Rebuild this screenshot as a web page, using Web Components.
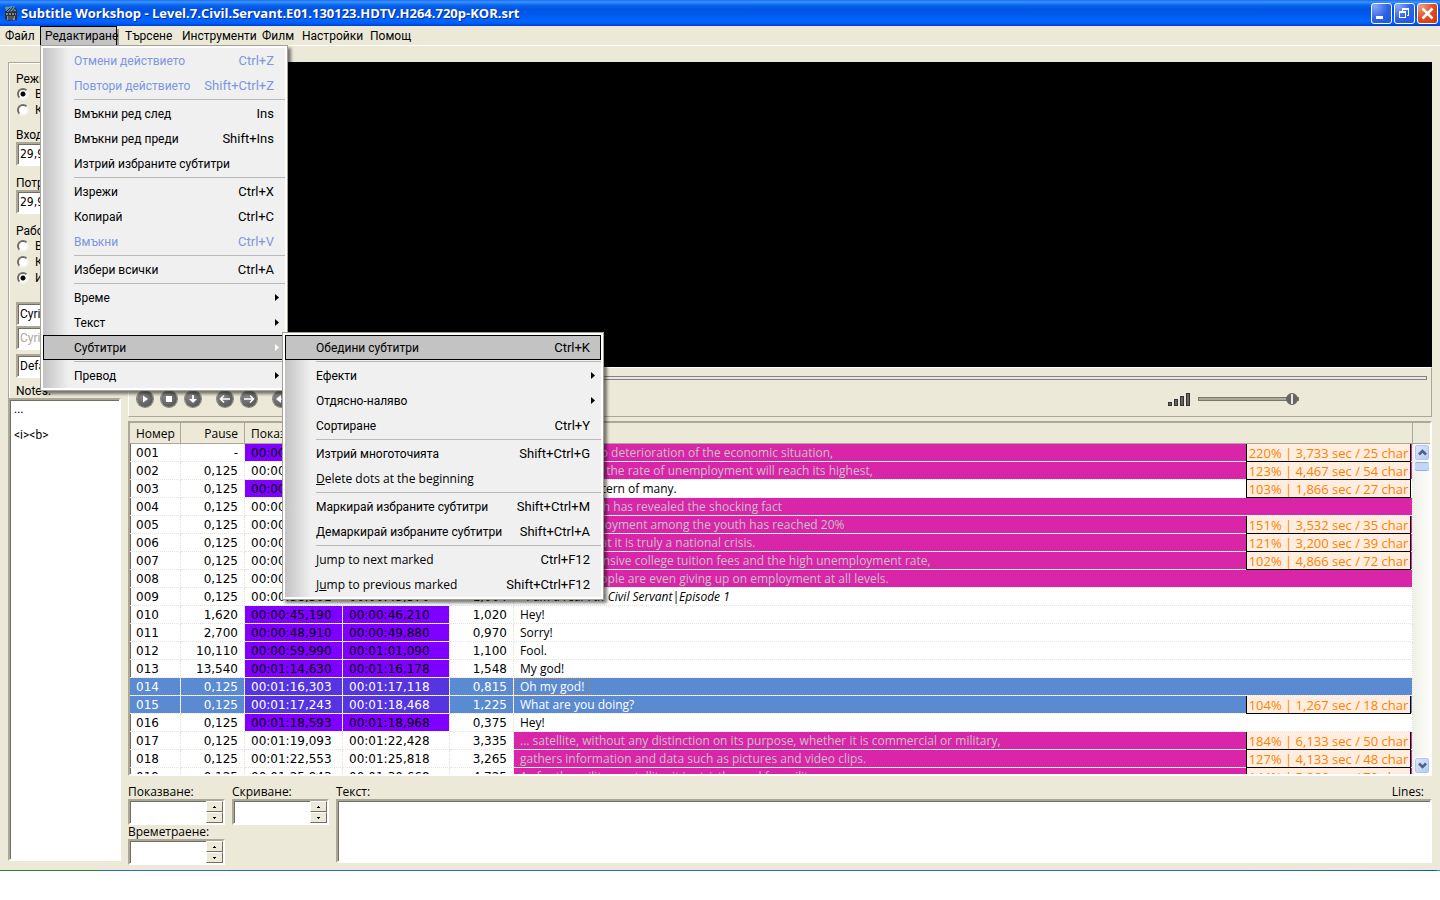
<!DOCTYPE html>
<html lang="bg">
<head>
<meta charset="utf-8">
<title>Subtitle Workshop</title>
<style>
  html { background: #fff; }
  body { margin: 0; font: 12px/15px Roboto, "Liberation Sans", sans-serif; color: #000; }
</style>
</head>
<body>
<sw-app></sw-app>
<script>
const define = (name, html, setup) => {
  const tpl = document.createElement('template');
  tpl.innerHTML = html;
  customElements.define(name, class extends HTMLElement {
    connectedCallback() {
      if (this.shadowRoot) return;
      const root = this.attachShadow({ mode: 'open' });
      root.append(tpl.content.cloneNode(true));
      if (setup) setup(this, root);
    }
  });
};

const SUNKEN = 'box-sizing: border-box; border: 2px solid; border-color: #aca899 #fff #fff #aca899; box-shadow: inset 1px 1px 0 #716f64; border-radius: 0; outline: none; background: #fff;';

/* Title bar */
define('sw-titlebar', `
<style>
  :host { display: flex; align-items: center; box-sizing: border-box; height: 26px; padding: 0 2px 0 3px;
    background: linear-gradient(#1c6cf0 0, #3a94ff 2px, #0a66f0 5px, #0054e3 9px, #0058ee 15px, #0066ff 20px, #0060fc 23px, #003dd0 26px); }
  h1 { flex: 1; margin: 0 0 0 3px; font: bold 13px/18px "Open Sans", sans-serif; color: #fff; text-shadow: 1px 1px 0 #0a2a8c; white-space: nowrap; }
  .buttons { display: flex; gap: 2px; }
  button { padding: 0; width: 21px; height: 21px; border: 1px solid #fff; border-radius: 3px;
    background: radial-gradient(circle at 15% 10%, #88a8f8, #2f62e4 55%, #1c56e8); }
  .close { background: radial-gradient(circle at 15% 10%, #f09a80, #e04a20 55%, #cc3a08); }
  svg { display: block; }
</style>
<svg width="15" height="17" viewBox="0 0 15 17"><path d="M2 4l9-2 3 3v10l-9 1-3-2z" fill="#2b3038"/><path d="M2 2l9-1 2 5-10 1z" fill="#5a96b4"/><path d="M3 7l4-4M6 7l4-5M9 7l3-4" stroke="#20242c"/><path d="M3 9h10" stroke="#d8d8d8" stroke-dasharray="2 1"/><path d="M4 11h8v4H4z" fill="#8a8f96"/><path d="M5 12h6M5 14h5" stroke="#181a20"/></svg>
<h1><slot></slot></h1>
<div class="buttons">
  <button aria-label="Minimize"><svg width="19" height="19"><path d="M4 12h7v3H4z" fill="#fff"/></svg></button>
  <button aria-label="Restore"><svg width="19" height="19" fill="#fff"><path d="M7 4h7v2H7zM13 6h1v6h-1zM12 11h1v1h-1zM7 6h1v1H7zM4 7h7v2H4zM4 9h1v5H4zM10 9h1v5h-1zM4 13h7v1H4z"/></svg></button>
  <button class="close" aria-label="Close"><svg width="19" height="19"><path d="M4.500 4.500l10 10M14.500 4.500l-10 10" stroke="#fff" stroke-width="2.500"/></svg></button>
</div>`);

/* Menu bar and its entries */
define('sw-menubar', `
<style>
  :host { display: grid; grid-template-columns: 40px 80px 57px 80px 40px 68px auto; justify-content: start;
    box-sizing: border-box; height: 20px; border-bottom: 1px solid #fff; position: relative; z-index: 10; }
</style><slot></slot>`);

define('sw-menu', `
<style>
  :host { display: block; position: relative; }
  button { width: 100%; height: 19px; padding: 2px 0 0 5px; border: 0; background: none; text-align: left; font: inherit; color: #000; white-space: nowrap; }
  :host([open]) button { width: 77px; padding: 0 0 0 4px; border: 1px solid #000; border-bottom: 0; background: #c3c3c3; box-shadow: 2px 3px 0 #a19e90; }
  ::slotted([slot=popup]) { position: absolute; left: 0; top: 19px; }
</style>
<button aria-haspopup="menu"></button><slot name="popup"></slot>`,
(el, root) => { root.querySelector('button').textContent = el.getAttribute('label'); });

define('sw-popup', `
<style>
  :host { display: block; box-sizing: border-box; border: 1px solid #a5a293; padding: 2px; background: #fff; box-shadow: 3px 3px 3px rgba(0,0,0,.5); z-index: 20; }
  .items { background: linear-gradient(90deg, #c3c3c3, #f0f0f0 26px); }
</style><div class="items" role="menu"><slot></slot></div>`);

define('sw-item', `
<style>
  :host { display: block; position: relative; }
  button { display: flex; justify-content: space-between; align-items: center; box-sizing: border-box; width: 100%; height: 25px;
    padding: 0 10px 0 30px; border: 1px solid transparent; background: none; font: inherit; color: #000; white-space: nowrap; }
  .label { padding-top: 2px; }
  :host([latin]) .label { padding-top: 0; font-family: "Open Sans", sans-serif; }
  .key { font-size: 13px; }
  button:disabled { color: #7b97e0; }
  :host([active]) button { background: #c3c3c3; border-color: #000; }
  :host([submenu]) button { padding-right: 5px; }
  svg { display: none; }
  :host([submenu]) svg { display: block; }
  :host([submenu][active]) svg { color: #fff; }
  ::slotted([slot=submenu]) { position: absolute; left: 239px; top: -3px; }
</style>
<button role="menuitem"><span class="label"><slot></slot></span><span class="key"></span><svg width="4" height="7"><path d="M0 0l4 3.500L0 7z" fill="currentColor"/></svg></button>
<slot name="submenu"></slot>`,
(el, root) => {
  const key = root.querySelector('.key');
  if (el.hasAttribute('key')) key.textContent = el.getAttribute('key'); else key.remove();
  root.querySelector('button').disabled = el.hasAttribute('off');
});

define('sw-sep', `
<style>:host { display: block; height: 3px; } hr { margin: 0 0 0 31px; border: 0; height: 2px; border-bottom: 1px solid #b9b9b9; box-sizing: border-box; }</style><hr>`);

/* Left settings column */
define('sw-settings', `
<style>
  :host { display: flex; flex-direction: column; }
  .group { box-sizing: border-box; border-left: 1px solid #aca899; border-top: 1px solid #aca899; box-shadow: inset 1px 1px 0 #fff; padding: 8px 8px 0 7px; overflow: hidden; white-space: nowrap; }
  .caption { display: block; height: 15px; line-height: 17px; margin-top: 9px; }
  .first { margin-top: 0; }
  .radio { display: flex; align-items: center; gap: 5px; height: 16px; line-height: 16px; }
  input { appearance: none; flex: none; box-sizing: border-box; width: 12px; height: 12px; margin: 0 1px; border: 2px solid; border-color: #716f64 #f4f2e8 #f4f2e8 #716f64; border-radius: 50%; background: #fff; }
  input:checked { background: radial-gradient(circle, #000 2px, #fff 3px); }
  select { ${SUNKEN} appearance: none; display: block; width: 97px; height: 24px; padding: 0 2px; font: 12px/18px "DejaVu Sans Condensed", sans-serif; color: #000; }
  .charset { margin-top: 16px; }
  .charset select { font: 12px/18px Roboto, sans-serif; }
  .charset select + select + select { margin-top: 4px; }
  select:disabled { color: #aca899; opacity: 1; }
  .notes { margin-top: 5px; }
  textarea { ${SUNKEN} flex: 1; margin: 0 0 4px; width: 100%; padding: 3px 4px; resize: none; font: 12px/13px Roboto, sans-serif; color: #000; }
</style>
<div class="group">
  <span class="caption first">Режим</span>
  <label class="radio"><input type="radio" name="mode" checked>Време</label>
  <label class="radio"><input type="radio" name="mode">Кадри</label>
  <label class="caption" for="in">Входящ FPS</label>
  <select id="in"><option>29,97</option></select>
  <label class="caption" for="out">Потребит. FPS</label>
  <select id="out"><option>29,97</option></select>
  <span class="caption">Работа с</span>
  <label class="radio"><input type="radio" name="work">Време</label>
  <label class="radio"><input type="radio" name="work">Край</label>
  <label class="radio"><input type="radio" name="work" checked>И двете</label>
  <div class="charset">
    <select aria-label="Charset"><option>Cyrillic</option></select>
    <select aria-label="Translation charset" disabled><option>Cyrillic</option></select>
    <select aria-label="Script"><option>Default</option></select>
  </div>
  <label class="caption notes" for="notes">Notes:</label>
</div>
<textarea id="notes">...

&lt;i&gt;&lt;b&gt;</textarea>`);

/* Playback controls */
define('sw-player', `
<style>
  :host { display: flex; flex-direction: column; box-sizing: border-box; height: 50px; border: 1px solid #aca899; border-left-color: #fff; border-top-color: #fff; padding: 8px 4px 0 8px; }
  input { appearance: none; display: block; margin: 0; background: none; }
  .seek { width: 100%; height: 4px; box-sizing: border-box; border: 1px solid #85827c; background: #ece2f5; }
  .seek::-webkit-slider-thumb { appearance: none; width: 12px; height: 12px; border-radius: 50%; background: #6a6a6a; }
  .row { display: flex; align-items: center; margin-top: 9px; height: 20px; }
  .set { display: flex; gap: 8px; margin-right: 16px; }
  button { width: 16px; height: 16px; padding: 0; border: 0; border-radius: 50%; background: radial-gradient(circle at 35% 30%, #8c8c8c, #585858 75%); box-shadow: 0 0 0 1px #88857c; }
  button svg { display: block; }
  .vol { display: flex; align-items: center; gap: 7px; margin: 0 128px 0 auto; }
  .level { width: 101px; height: 13px; }
  .level::-webkit-slider-runnable-track { height: 4px; box-sizing: border-box; border: 1px solid #77756c; background: #aca899; }
  .level::-webkit-slider-thumb { appearance: none; box-sizing: border-box; width: 12px; height: 12px; margin-top: -5px; border-radius: 50%; background: linear-gradient(90deg, #666 4px, #e6e6e6 4px, #e6e6e6 6px, #666 6px); border: 1px solid #666; }
</style>
<input class="seek" type="range" value="0" aria-label="Position">
<div class="row">
  <div class="set"></div><div class="set"></div><div class="set"></div>
  <div class="vol">
    <svg width="23" height="14" fill="#666" stroke="#333"><rect x=".5" y="10.500" width="3" height="3"/><rect x="6.500" y="7.500" width="3" height="6"/><rect x="12.500" y="4.500" width="3" height="9"/><rect x="18.500" y="1.500" width="3" height="12"/></svg>
    <input class="level" type="range" value="100" aria-label="Volume">
  </div>
</div>`,
(el, root) => {
  const icons = [
    [['Play', '<path d="M6 4.500L11 8 6 11.500z" fill="#fff"/>'], ['Stop', '<path d="M5 5h6v6H5z" fill="#fff"/>'],
     ['Scroll list', '<path d="M7 4h2v4h3l-4 4-4-4h3z" fill="#fff"/>']],
    [['Previous subtitle', '<path d="M13 8H4M7 4.500L3.500 8 7 11.500" fill="none" stroke="#fff" stroke-width="1.500"/>'],
     ['Next subtitle', '<path d="M3 8h9M9 4.500L12.500 8 9 11.500" fill="none" stroke="#fff" stroke-width="1.500"/>']],
    [['Rewind', '<path d="M8 4v8L3 8zM13 4v8L8 8z" fill="#fff"/>'], ['Forward', '<path d="M3 4v8l5-4zM8 4v8l5-4z" fill="#fff"/>']]
  ];
  root.querySelectorAll('.set').forEach((set, i) => {
    set.innerHTML = icons[i].map(([n, p]) => `<button aria-label="${n}"><svg width="16" height="16">${p}</svg></button>`).join('');
  });
});

/* Subtitle list. Flags: s = short time cells, p = long line, x = selected, f = focused */
const ROWS = [
  ['001', '-', '00:00:09,100', '00:00:12,833', '3,733', 'Following sharp deterioration of the economic situation,', 'sp', '220% | 3,733 sec / 25 char'],
  ['002', '0,125', '00:00:12,958', '00:00:17,425', '4,467', 'All fall in Korea the rate of unemployment will reach its highest,', 'p', '123% | 4,467 sec / 54 char'],
  ['003', '0,125', '00:00:17,550', '00:00:19,416', '1,866', 'so it is the concern of many.', 's', '103% | 1,866 sec / 27 char'],
  ['004', '0,125', '00:00:19,541', '00:00:22,666', '3,125', 'Recent research has revealed the shocking fact', 'p', ''],
  ['005', '0,125', '00:00:22,791', '00:00:26,323', '3,532', 'so that unemployment among the youth has reached 20%', 'p', '151% | 3,532 sec / 35 char'],
  ['006', '0,125', '00:00:26,448', '00:00:29,648', '3,200', 'It is so clear that it is truly a national crisis.', 'p', '121% | 3,200 sec / 39 char'],
  ['007', '0,125', '00:00:29,773', '00:00:34,639', '4,866', 'With very expensive college tuition fees and the high unemployment rate,', 'p', '102% | 4,866 sec / 72 char'],
  ['008', '0,125', '00:00:34,764', '00:00:38,176', '3,412', 'Now young people are even giving up on employment at all levels.', 'p', ''],
  ['009', '0,125', '00:00:38,301', '00:00:43,570', '1,004', '<i>- I am a real 7th Civil Servant|Episode 1</i>', '', ''],
  ['010', '1,620', '00:00:45,190', '00:00:46,210', '1,020', 'Hey!', 's', ''],
  ['011', '2,700', '00:00:48,910', '00:00:49,880', '0,970', 'Sorry!', 's', ''],
  ['012', '10,110', '00:00:59,990', '00:01:01,090', '1,100', 'Fool.', 's', ''],
  ['013', '13,540', '00:01:14,630', '00:01:16,178', '1,548', 'My god!', 's', ''],
  ['014', '0,125', '00:01:16,303', '00:01:17,118', '0,815', 'Oh my god!', 'sxf', ''],
  ['015', '0,125', '00:01:17,243', '00:01:18,468', '1,225', 'What are you doing?', 'sx', '104% | 1,267 sec / 18 char'],
  ['016', '0,125', '00:01:18,593', '00:01:18,968', '0,375', 'Hey!', 's', ''],
  ['017', '0,125', '00:01:19,093', '00:01:22,428', '3,335', '... satellite, without any distinction on its purpose, whether it is commercial or military,', 'p', '184% | 6,133 sec / 50 char'],
  ['018', '0,125', '00:01:22,553', '00:01:25,818', '3,265', 'gathers information and data such as pictures and video clips.', 'p', '127% | 4,133 sec / 48 char'],
  ['019', '0,125', '00:01:25,943', '00:01:30,668', '4,725', 'As for the military satellite, it is strictly used for military.', 'p', '144% | 5,066 sec / 70 char']
];

define('sw-list', `
<style>
  :host { display: grid; grid-template-columns: 1fr 17px; grid-template-rows: minmax(0, 1fr); ${SUNKEN} overflow: hidden; }
  .view { overflow: hidden; }
  table { width: 100%; table-layout: fixed; border-collapse: separate; border-spacing: 0; }
  th { box-sizing: border-box; height: 21px; padding: 2px 6px 0; border-right: 1px solid #aca899; border-bottom: 1px solid #aca899; background: #ece9d8; font: 12px/18px "Open Sans", Roboto, sans-serif; text-align: left; white-space: nowrap; overflow: hidden; }
  th.r, td.r { text-align: right; }
  td { height: 15px; padding: 2px 6px 0; border-right: 1px dotted #e4e0cc; border-bottom: 1px dotted #e4e4e4; background-clip: padding-box; font: 12px/15px "DejaVu Sans", sans-serif; white-space: nowrap; }
  td.text { height: 17px; padding: 0; font-family: "Open Sans", sans-serif; }
  .line { display: flex; justify-content: space-between; height: 17px; }
  .words { box-sizing: border-box; height: 17px; padding: 1px 6px 0; line-height: 16px; }
  .info { box-sizing: border-box; width: 165px; height: 18px; margin-right: 1px; border: 1px solid #000; border-top: 0; background: #ffeee0; color: #ff8000; font: 13px/18px "Open Sans", sans-serif; text-align: center; }
  .s td.t { background-color: #8000ff; }
  .p td.text { background-color: #d926a9; color: #c8c0c8; }
  .x td { background-color: #5a8ad2; color: #fff; }
  .x td.t { background-color: #5535e0; }
  .f .words { outline: 1px dotted #c08030; outline-offset: -1px; }
  .scroll { display: flex; flex-direction: column; background: linear-gradient(90deg, #f0f0ea, #fdfdfa); }
  .corner { box-sizing: border-box; height: 21px; background: #ece9d8; border-bottom: 1px solid #aca899; }
  button { flex: none; width: 16px; height: 17px; margin: 0 0 0 1px; padding: 0; border: 1px solid #fff; border-radius: 3px; background: linear-gradient(135deg, #dfe8ff, #b4c8f6); box-shadow: inset 0 0 0 1px #b0c4ee; }
  button svg { display: block; margin: 0 auto; }
  .thumb { height: 7px; margin: 1px 1px 0 2px; border: 1px solid #94aee0; border-width: 1px 0; border-radius: 2px; background: #c4d4fb; }
  .gap { flex: 1; }
</style>
<div class="view"><table>
  <colgroup><col style="width:51px"><col style="width:64px"><col style="width:98px"><col style="width:107px"><col style="width:64px"><col></colgroup>
  <thead><tr><th>Номер</th><th class="r">Pause</th><th>Показване</th><th>Скриване</th><th class="r">Време</th><th>Текст</th></tr></thead>
  <tbody></tbody>
</table></div>
<div class="scroll"><div class="corner"></div>
  <button aria-label="Up"><svg width="9" height="7"><path d="M1 5.500l3.500-3.500L8 5.500" fill="none" stroke="#4d6185" stroke-width="2.500"/></svg></button>
  <div class="thumb"></div><div class="gap"></div>
  <button aria-label="Down"><svg width="9" height="7"><path d="M1 1.500l3.500 3.500L8 1.500" fill="none" stroke="#4d6185" stroke-width="2.500"/></svg></button>
</div>`,
(el, root) => {
  root.querySelector('tbody').innerHTML = ROWS.map(([n, pause, show, hide, dur, text, flags, info]) =>
    `<tr class="${[...flags].join(' ')}"><td>${n}</td><td class="r">${pause}</td><td class="t">${show}</td><td class="t">${hide}</td><td class="r">${dur}</td>` +
    `<td class="text"><div class="line"><span class="words">${text}</span>${info ? `<span class="info">${info}</span>` : ''}</div></td></tr>`).join('');
});

/* Time box with up and down buttons */
define('sw-time', `
<style>
  :host { display: block; font-family: "Open Sans", sans-serif; }
  label { display: block; height: 14px; line-height: 14px; white-space: nowrap; }
  .box { display: flex; ${SUNKEN} height: 26px; }
  input { flex: 1; min-width: 0; border: 0; margin: 2px; padding: 0 2px; outline: none; background: none; font: inherit; }
  .spin { display: grid; grid-template-rows: 11px 11px; width: 17px; }
  button { padding: 0; border: 1px solid; border-color: #fff #716f64 #716f64 #fff; background: #ece9d8; display: grid; place-items: center; }
</style>
<label for="v"></label>
<div class="box"><input id="v" type="text"><div class="spin">
  <button aria-label="+"><svg width="3" height="2"><path d="M0 2h3v-1h-1V0H1v1H0z"/></svg></button>
  <button aria-label="-"><svg width="3" height="2"><path d="M0 0h3v1h-1v1H1V1H0z"/></svg></button>
</div></div>`,
(el, root) => { root.querySelector('label').textContent = el.getAttribute('label'); });

define('sw-editor', `
<style>
  :host { display: grid; grid-template-columns: 97px 97px 1fr; gap: 0 7px; padding-top: 9px; height: 80px; font-family: "Open Sans", sans-serif; }
  .text { grid-column: 3; grid-row: 1 / 3; display: flex; flex-direction: column; }
  .head { display: flex; justify-content: space-between; height: 14px; line-height: 14px; padding-right: 8px; }
  textarea { ${SUNKEN} flex: 1; width: 100%; margin: 0 0 2px; resize: none; font: inherit; }
</style>
<sw-time label="Показване:"></sw-time>
<sw-time label="Скриване:"></sw-time>
<div class="text"><div class="head"><label for="t">Текст:</label><span>Lines:</span></div><textarea id="t"></textarea></div>
<sw-time label="Времетраене:"></sw-time>`);

define('sw-app', `
<style>
  :host { display: flex; flex-direction: column; height: calc(100vh - 29px); min-height: 640px; background: #ece9d8; }
  main { flex: 1; min-height: 0; display: grid; grid-template-columns: 113px minmax(0, 1fr); grid-template-rows: minmax(0, 1fr); gap: 7px; padding: 16px 8px 5px; }
  .work { display: flex; flex-direction: column; min-height: 0; }
  .video { flex: 305 1 0; background: #000; }
  sw-list { flex: 351 1 0; min-height: 0; margin-top: 4px; }
  .edge { display: flex; height: 1px; background: linear-gradient(90deg, #316ac5 85%, #0f5cc8); }
  .edge i { width: 98px; background: #2f7d32; }
  .edge b { width: 3px; height: 3px; margin-left: auto; background: #14a0f0; }
</style>
<sw-titlebar>Subtitle Workshop - Level.7.Civil.Servant.E01.130123.HDTV.H264.720p-KOR.srt</sw-titlebar>
<sw-menubar>
  <sw-menu label="Файл"></sw-menu>
  <sw-menu label="Редактиране" open>
    <sw-popup slot="popup" style="width:248px">
      <sw-item key="Ctrl+Z" off>Отмени действието</sw-item>
      <sw-item key="Shift+Ctrl+Z" off>Повтори действието</sw-item>
      <sw-sep></sw-sep>
      <sw-item key="Ins">Вмъкни ред след</sw-item>
      <sw-item key="Shift+Ins">Вмъкни ред преди</sw-item>
      <sw-item>Изтрий избраните субтитри</sw-item>
      <sw-sep></sw-sep>
      <sw-item key="Ctrl+X">Изрежи</sw-item>
      <sw-item key="Ctrl+C">Копирай</sw-item>
      <sw-item key="Ctrl+V" off>Вмъкни</sw-item>
      <sw-sep></sw-sep>
      <sw-item key="Ctrl+A">Избери всички</sw-item>
      <sw-sep></sw-sep>
      <sw-item submenu>Време</sw-item>
      <sw-item submenu>Текст</sw-item>
      <sw-item submenu active>Субтитри
        <sw-popup slot="submenu" style="width:322px">
          <sw-item key="Ctrl+K" active>Обедини субтитри</sw-item>
          <sw-sep></sw-sep>
          <sw-item submenu>Ефекти</sw-item>
          <sw-item submenu>Отдясно-наляво</sw-item>
          <sw-item key="Ctrl+Y">Сортиране</sw-item>
          <sw-sep></sw-sep>
          <sw-item key="Shift+Ctrl+G">Изтрий многоточията</sw-item>
          <sw-item latin><u>D</u>elete dots at the beginning</sw-item>
          <sw-sep></sw-sep>
          <sw-item key="Shift+Ctrl+M">Маркирай избраните субтитри</sw-item>
          <sw-item key="Shift+Ctrl+A">Демаркирай избраните субтитри</sw-item>
          <sw-sep></sw-sep>
          <sw-item latin key="Ctrl+F12"><u>J</u>ump to next marked</sw-item>
          <sw-item latin key="Shift+Ctrl+F12">J<u>u</u>mp to previous marked</sw-item>
        </sw-popup>
      </sw-item>
      <sw-sep></sw-sep>
      <sw-item submenu>Превод</sw-item>
    </sw-popup>
  </sw-menu>
  <sw-menu label="Търсене"></sw-menu>
  <sw-menu label="Инструменти"></sw-menu>
  <sw-menu label="Филм"></sw-menu>
  <sw-menu label="Настройки"></sw-menu>
  <sw-menu label="Помощ"></sw-menu>
</sw-menubar>
<main>
  <sw-settings></sw-settings>
  <div class="work">
    <div class="video"></div>
    <sw-player></sw-player>
    <sw-list></sw-list>
    <sw-editor></sw-editor>
  </div>
</main>
<div class="edge"><i></i><b></b></div>`);
</script>
</body>
</html>
